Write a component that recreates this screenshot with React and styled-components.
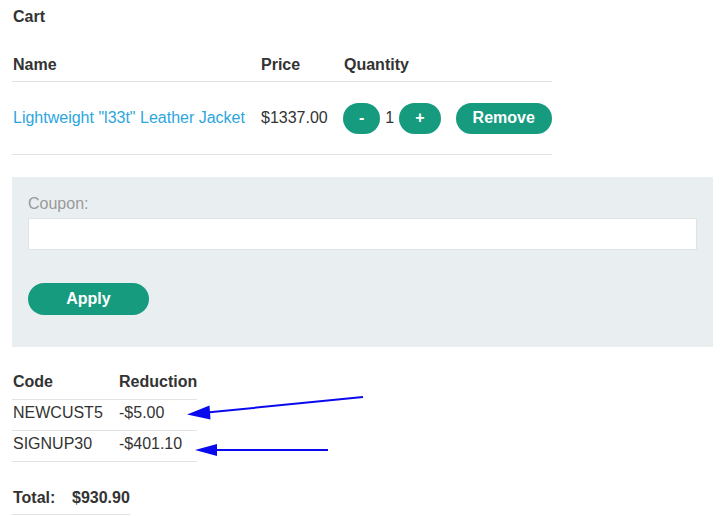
import React from "react"
import styled, { createGlobalStyle } from "styled-components"

const GlobalStyle = createGlobalStyle`
    body {
        margin: 0;
        background: #fff;
        font-family: "Liberation Sans", Arial, sans-serif;
        font-size: 16px;
        color: #333;
    }
`

const Page = styled.div`
    position: relative;
    padding: 0 8px 0 12px;
    line-height: 20px;
`

const Title = styled.h1`
    margin: 7px 0 18px 1px;
    font-size: 16px;
    line-height: 20px;
    font-weight: bold;
`

const Table = styled.div`
    display: grid;
    grid-template-columns: ${p => p.$cols};
    width: ${p => p.$width}px;
`

const Cell = styled.div`
    box-sizing: border-box;
    display: flex;
    align-items: center;
    padding: ${p => p.$pad};
    padding-left: 1px;
    border-bottom: 1px solid #e3e3e3;
    font-weight: ${p => (p.$head ? "bold" : "normal")};
    height: ${p => p.$h}px;
`

const Link = styled.a`
    color: #2ba6de;
    text-decoration: none;
`

const Pill = styled.button`
    display: block;
    height: ${p => p.$h || 31}px;
    min-width: ${p => p.$min || 0}px;
    padding: 0 16px;
    border: none;
    border-radius: 16px;
    background: #179b7f;
    color: #fff;
    font-family: "Liberation Sans", Arial, sans-serif;
    font-size: 16px;
    font-weight: bold;
    cursor: pointer;
`

const Qty = styled.div`
    display: flex;
    align-items: center;
    gap: 5px;
    margin-left: -1px;
`

const RemoveButton = styled(Pill)`
    margin-left: 10px;
    padding: 0 17px;
`

const CouponPanel = styled.div`
    margin-top: 22px;
    width: 669px;
    padding: 17px 16px 32px 16px;
    background: #e9eff1;
`

const Label = styled.label`
    display: block;
    color: #999;
    line-height: 20px;
    margin-bottom: 4px;
`

const Input = styled.input`
    display: block;
    box-sizing: border-box;
    width: 669px;
    height: 32px;
    border: 1px solid #e0e4e6;
    background: #fff;
    margin: 0 0 33px 0;
`

const Discounts = styled.div`
    margin-top: 18px;
`

const TotalTable = styled.div`
    margin-top: 19px;
`

const Overlay = styled.svg`
    position: absolute;
    left: 0;
    top: 0;
    pointer-events: none;
`

const discounts = [
    { code: "NEWCUST5", amount: "-$5.00" },
    { code: "SIGNUP30", amount: "-$401.10" },
]

const Arrows = () => (
    <Overlay width="721" height="516">
        <g stroke="#0a0aee" strokeWidth="2">
            <line x1="363" y1="390" x2="207" y2="405.5" />
            <line x1="328" y1="443" x2="213" y2="443" />
        </g>
        <g fill="#0a0aee">
            <polygon points="187,407.5 209.5,398.5 210.5,412.5" />
            <polygon points="195,443 217,437 217,449" />
        </g>
    </Overlay>
)

const App = () => {
    const [qty, setQty] = React.useState(1)

    return (
        <Page>
            <GlobalStyle />
            <Title>Cart</Title>

            <Table $cols="248px 83px 1fr" $width={539}>
                <Cell $head $pad="10px 0 6px" $h={37}>Name</Cell>
                <Cell $head $pad="10px 0 6px" $h={37}>Price</Cell>
                <Cell $head $pad="10px 0 6px" $h={37}>Quantity</Cell>

                <Cell $pad="0" $h={73}><Link href="#">Lightweight "l33t" Leather Jacket</Link></Cell>
                <Cell $pad="0" $h={73}>$1337.00</Cell>
                <Cell $pad="0" $h={73}>
                    <Qty>
                        <Pill onClick={() => setQty(Math.max(0, qty - 1))}>-</Pill>
                        <span>{qty}</span>
                        <Pill onClick={() => setQty(qty + 1)}>+</Pill>
                        <RemoveButton>Remove</RemoveButton>
                    </Qty>
                </Cell>
            </Table>

            <CouponPanel>
                <Label htmlFor="coupon">Coupon:</Label>
                <Input id="coupon" type="text" />
                <Pill $min={121} $h={32}>Apply</Pill>
            </CouponPanel>

            <Discounts>
                <Table $cols="106px 1fr" $width={185}>
                    <Cell $head $pad="7px 0 7px" $h={35}>Code</Cell>
                    <Cell $head $pad="7px 0 7px" $h={35}>Reduction</Cell>
                    {discounts.map(d => (
                        <React.Fragment key={d.code}>
                            <Cell $pad="3px 0 7px" $h={31}>{d.code}</Cell>
                            <Cell $pad="3px 0 7px" $h={31}>{d.amount}</Cell>
                        </React.Fragment>
                    ))}
                </Table>
            </Discounts>

            <TotalTable>
                <Table $cols="59px 1fr" $width={117}>
                    <Cell $head $pad="7px 0 6px" $h={34}>Total:</Cell>
                    <Cell $head $pad="7px 0 6px" $h={34}>$930.90</Cell>
                </Table>
            </TotalTable>

            <Arrows />
        </Page>
    )
}

export default App
